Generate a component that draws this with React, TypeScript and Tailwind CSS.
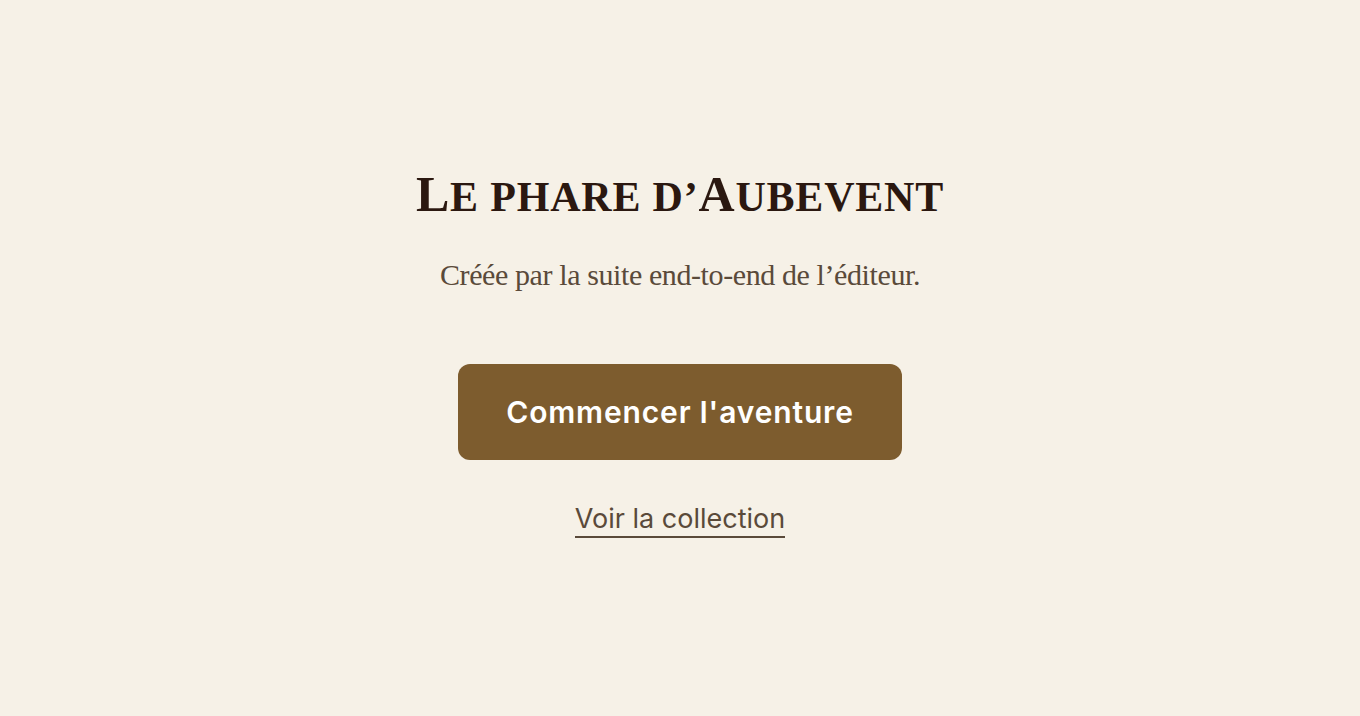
export default function App() {
  return (
    <div className="min-h-[716px] w-full bg-[#f6f1e7] flex flex-col items-center">
      <h1 className="mt-[160px] text-[50px] leading-[68px] font-bold uppercase text-[#2b1810] tracking-[0.8px] font-['Liberation_Serif',serif]">
        L<span className="text-[42px]">e phare d’</span>A<span className="text-[42px]">ubevent</span>
      </h1>
      <p className="mt-[24px] text-[30px] leading-[40px] text-[#5a4a3a] tracking-[-0.4px] font-['Liberation_Serif',serif]">
        Créée par la suite end-to-end de l’éditeur.
      </p>
      <button className="mt-[69px] w-[444px] h-[96px] rounded-[12px] bg-[#7d5c2e] text-white text-[30px] font-semibold tracking-[0.85px] font-['Inter',sans-serif]">
        Commencer l'aventure
      </button>
      <a
        href="#"
        className="mt-[41px] text-[27px] leading-[35px] text-[#5a4a3a] border-b-2 border-[#5a4a3a] font-['Inter',sans-serif]"
      >
        Voir la collection
      </a>
    </div>
  );
}
